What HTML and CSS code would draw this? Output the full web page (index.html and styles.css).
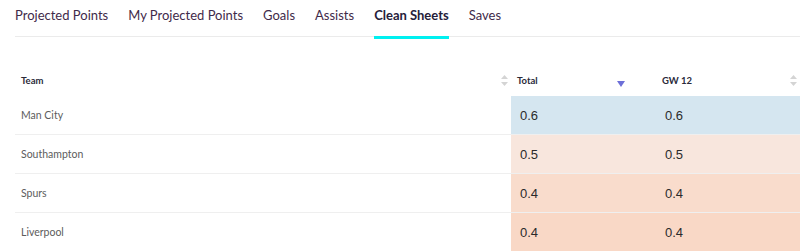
FILE: index.html
```html
<!DOCTYPE html>
<html>
<head>
<meta charset="utf-8">
<link rel="stylesheet" href="styles.css">
</head>
<body>
<div class="page">
  <nav class="tabs">
    <span class="tab">Projected Points</span>
    <span class="tab">My Projected Points</span>
    <span class="tab">Goals</span>
    <span class="tab">Assists</span>
    <span class="tab active">Clean Sheets</span>
    <span class="tab">Saves</span>
  </nav>
  <table class="grid">
    <colgroup>
      <col class="c-team"><col class="c-total"><col class="c-gw">
    </colgroup>
    <thead>
      <tr>
        <th><div class="hcell"><span>Team</span><svg class="sort" width="7" height="11" viewBox="0 0 7 11"><path d="M3.5 0 L7 4 H0 Z M3.5 11 L7 7 H0 Z" fill="#d4d4d4"/></svg></div></th>
        <th><div class="hcell"><span>Total</span><svg class="sort down" width="8" height="7" viewBox="0 0 8 7"><path d="M0 1 H8 L4 7 Z" fill="#6d6fd8"/></svg></div></th>
        <th><div class="hcell"><span>GW 12</span><svg class="sort" width="7" height="11" viewBox="0 0 7 11"><path d="M3.5 0 L7 4 H0 Z M3.5 11 L7 7 H0 Z" fill="#d4d4d4"/></svg></div></th>
      </tr>
    </thead>
    <tbody>
      <tr><td class="team">Man City</td><td class="num blue">0.6</td><td class="num blue">0.6</td></tr>
      <tr><td class="team">Southampton</td><td class="num o1">0.5</td><td class="num o1">0.5</td></tr>
      <tr><td class="team">Spurs</td><td class="num o2">0.4</td><td class="num o2">0.4</td></tr>
      <tr><td class="team">Liverpool</td><td class="num o3">0.4</td><td class="num o3">0.4</td></tr>
    </tbody>
  </table>
</div>
</body>
</html>
```

FILE: styles.css
```css
html, body {
  margin: 0;
  background: #ffffff;
}
.page {
  padding-left: 15px;
  font-family: Lato, "Noto Sans", sans-serif;
}
.tabs {
  display: flex;
  gap: 20px;
  height: 37px;
  border-bottom: 1px solid #ebebeb;
  box-sizing: border-box;
  align-items: flex-start;
}
.tab {
  font-size: 13px;
  color: #3f2a4a;
  line-height: 16px;
  padding-top: 7px;
  height: 37px;
  box-sizing: border-box;
}
.tab.active {
  font-weight: 700;
  color: #25203a;
  border-bottom: 3px solid #00f0f0;
  height: 39px;
}
.grid {
  margin-top: 25px;
  width: 785px;
  border-collapse: collapse;
  table-layout: fixed;
}
.c-team { width: 496px; }
.c-total { width: 144px; }
.c-gw { width: 145px; }
th {
  height: 32px;
  padding: 2px 0 0;
  text-align: left;
  font-size: 9.5px;
  font-weight: 700;
  color: #2a2a3a;
}
.hcell {
  display: flex;
  align-items: center;
  justify-content: space-between;
}
th:first-child .hcell { padding-left: 6px; padding-right: 3px; }
th:nth-child(2) .hcell { padding-left: 6px; padding-right: 30px; }
th:nth-child(2) .sort { margin-top: 6px; }
th:nth-child(3) .hcell { padding-left: 7px; padding-right: 3px; }
td {
  height: 38px;
  padding: 0;
  border-bottom: 1px solid #efefef;
}
.team {
  padding-left: 6px;
  font-size: 10.5px;
  color: #5c5c5c;
}
.num {
  padding-left: 9px;
  font-family: "Liberation Sans", Arial, sans-serif;
  font-size: 13px;
  color: #2b2b2b;
}
td.num:last-child { padding-left: 10px; }
.blue { background: #d5e6f0; }
.o1 { background: #f8e6dd; }
.o2 { background: #f9dccc; }
.o3 { background: #f9d8c6; }
```
